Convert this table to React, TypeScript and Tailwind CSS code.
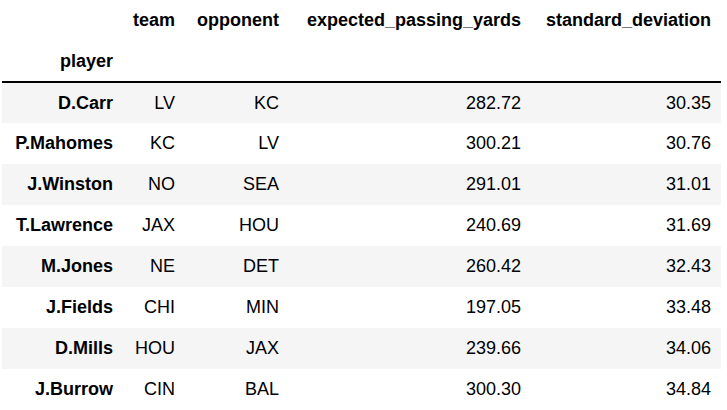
const rows = [
  ["D.Carr", "LV", "KC", "282.72", "30.35"],
  ["P.Mahomes", "KC", "LV", "300.21", "30.76"],
  ["J.Winston", "NO", "SEA", "291.01", "31.01"],
  ["T.Lawrence", "JAX", "HOU", "240.69", "31.69"],
  ["M.Jones", "NE", "DET", "260.42", "32.43"],
  ["J.Fields", "CHI", "MIN", "197.05", "33.48"],
  ["D.Mills", "HOU", "JAX", "239.66", "34.06"],
  ["J.Burrow", "CIN", "BAL", "300.30", "34.84"],
];

export default function App() {
  return (
    <div className="w-[727px] h-[410px] overflow-hidden bg-white pl-[2px] font-['Liberation_Sans',Arial,sans-serif] text-[18px] text-black">
      <table className="border-collapse table-fixed w-[719px]">
        <colgroup>
          <col className="w-[121px]" />
          <col className="w-[62px]" />
          <col className="w-[104px]" />
          <col className="w-[242px]" />
          <col className="w-[190px]" />
        </colgroup>
        <thead>
          <tr className="h-[41px]">
            <th className="pr-[10px]"></th>
            <th className="pr-[10px] text-right font-bold">team</th>
            <th className="pr-[10px] text-right font-bold">opponent</th>
            <th className="pr-[10px] text-right font-bold">expected_passing_yards</th>
            <th className="pr-[10px] text-right font-bold">standard_deviation</th>
          </tr>
          <tr className="h-[41px] border-b-2 border-black">
            <th className="pr-[10px] text-right font-bold">player</th>
            <th></th>
            <th></th>
            <th></th>
            <th></th>
          </tr>
        </thead>
        <tbody>
          {rows.map((r, i) => (
            <tr key={r[0]} className={`h-[41px] ${i % 2 === 0 ? "bg-[#f5f5f5]" : "bg-white"}`}>
              <th className="pr-[10px] text-right font-bold">{r[0]}</th>
              <td className="pr-[10px] text-right">{r[1]}</td>
              <td className="pr-[10px] text-right">{r[2]}</td>
              <td className="pr-[10px] text-right">{r[3]}</td>
              <td className="pr-[10px] text-right">{r[4]}</td>
            </tr>
          ))}
        </tbody>
      </table>
    </div>
  );
}
